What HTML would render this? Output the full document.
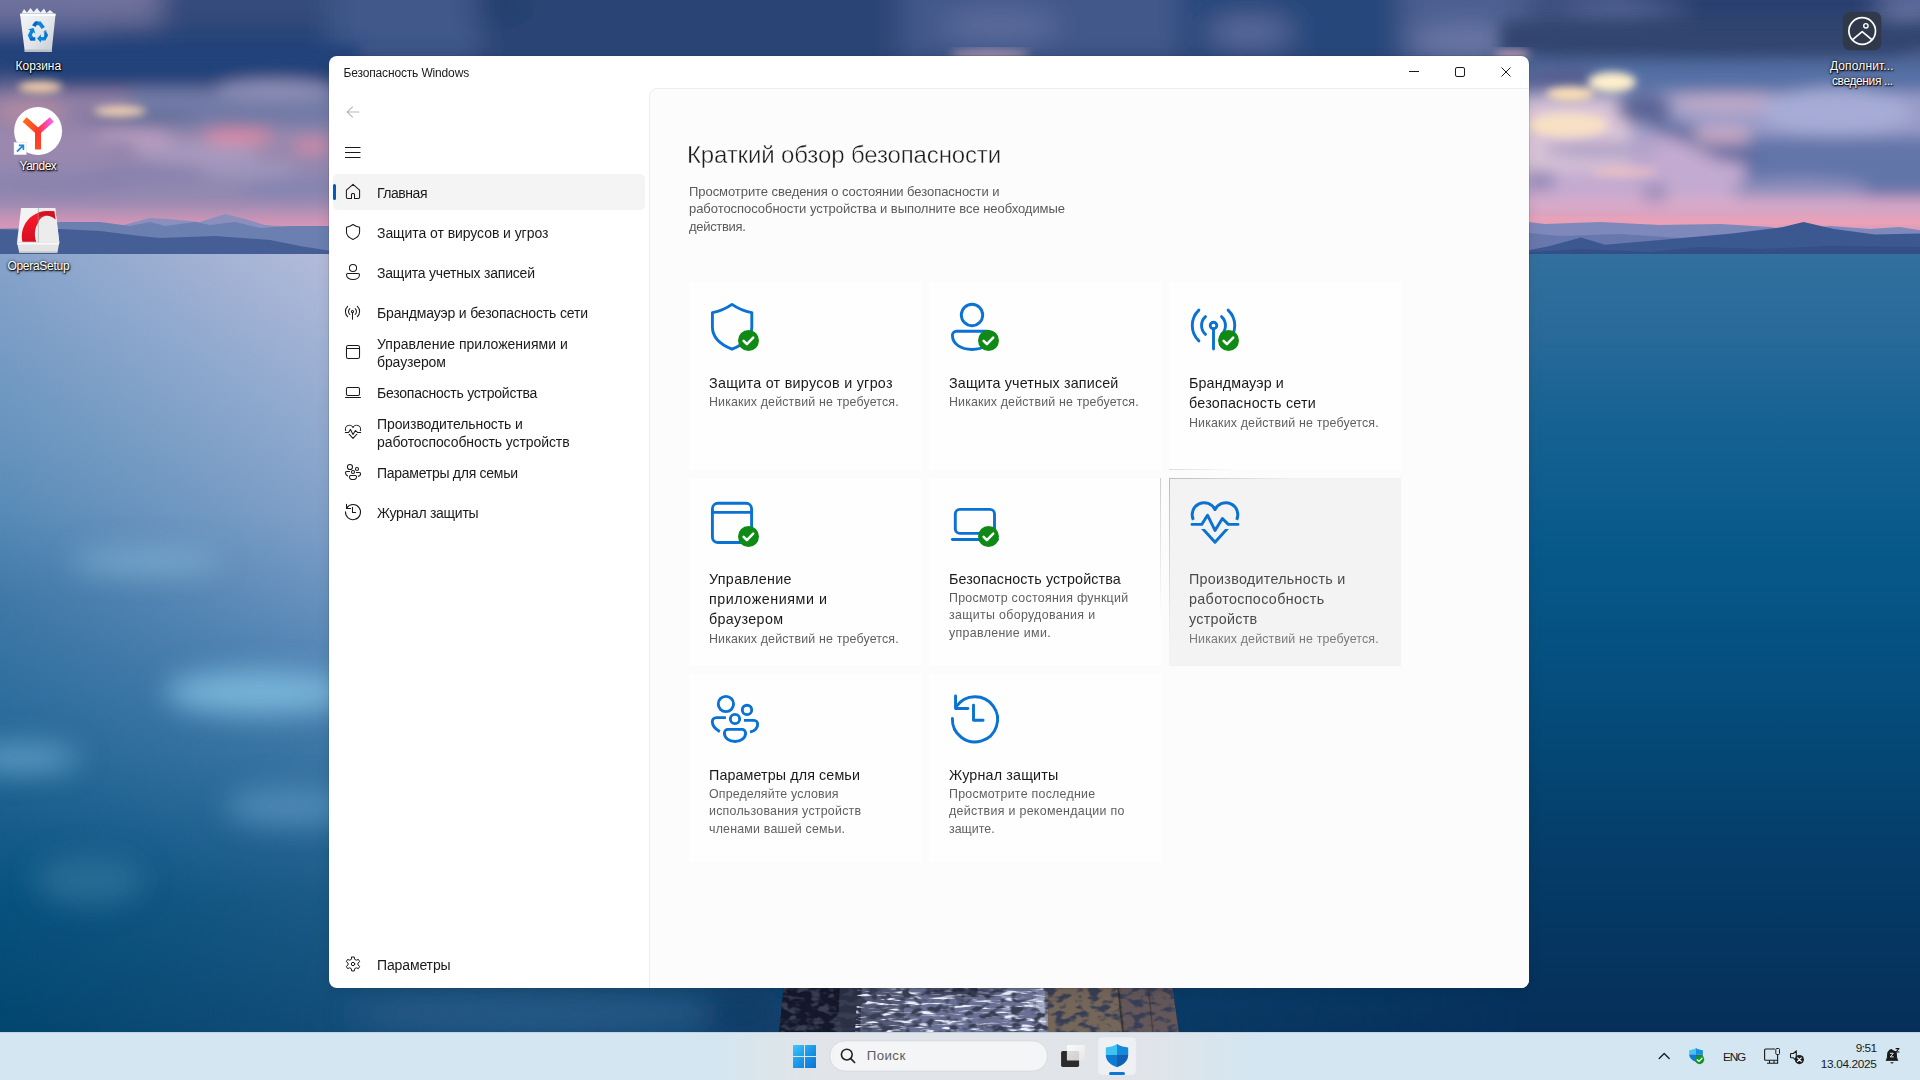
<!DOCTYPE html>
<html lang="ru"><head><meta charset="utf-8"><title>Безопасность Windows</title>
<style>
*{box-sizing:border-box;margin:0;padding:0}
html,body{width:1920px;height:1080px;overflow:hidden;background:#0d4878;font-family:"Liberation Sans",sans-serif;color:#1a1a1a}
body{position:relative}
.wp{position:absolute;left:0;top:0;width:1920px;height:1080px;display:block}
.abs{position:absolute}
.t{position:absolute;white-space:nowrap;line-height:1;transform-origin:0 0}
/* desktop icons */
.dlabel{position:absolute;color:#fff;font-size:12px;line-height:15px;text-align:center;white-space:nowrap;text-shadow:0 1px 2px rgba(0,0,0,.9),0 0 3px rgba(0,0,0,.8),1px 1px 1px rgba(0,0,0,.7)}
/* window */
.win{position:absolute;left:329px;top:56px;width:1200px;height:932px;background:#fff;border-radius:8px;overflow:hidden;box-shadow:0 0 0 1px rgba(40,50,70,.14),0 4px 14px rgba(0,0,0,.10)}
.panel{position:absolute;left:320px;top:32px;width:900px;height:920px;background:#fcfcfc;border:1px solid #ededed;border-top-left-radius:8px}
.sel{position:absolute;left:4px;top:118px;width:312px;height:36px;background:#f4f4f4;border-radius:5px}
.acc{position:absolute;left:4px;top:128px;width:3px;height:16px;background:#005fb8;border-radius:2px}
.nav{position:absolute;left:48px;font-size:14px;line-height:18px;color:#1a1a1a;white-space:nowrap}
.ico{position:absolute;left:15px;width:18px;height:18px;overflow:visible;fill:none;stroke:#1a1a1a;stroke-width:1.15;stroke-linecap:round;stroke-linejoin:round}
.tile{position:absolute;width:232px;height:188px;background:#fefefe}
.tile.hov{background:#f3f3f3}
.tt{position:absolute;left:20px;font-size:15px;line-height:20px;color:#1a1a1a;white-space:nowrap}
.td{position:absolute;left:20px;font-size:13px;line-height:17.5px;color:#5f5f5f;white-space:nowrap}
.hov .tt{color:#4a4a4a}.hov .td{color:#7a7a7a}
.big{position:absolute;overflow:visible;fill:none;stroke:#0a72d3;stroke-width:2.9;stroke-linecap:round;stroke-linejoin:round}
.badge{position:absolute;width:21px;height:21px;border-radius:50%;background:#0f8a14}
.badge svg{position:absolute;left:0;top:0;width:21px;height:21px}
/* taskbar */
.tb{position:absolute;left:0;top:1032px;width:1920px;height:48px;background:#d3e6f1;border-top:1px solid #c0d3e0}
.tray{position:absolute;font-size:12px;color:#1a1a1a;white-space:nowrap;line-height:14px}
</style></head>
<body>
<svg class="wp" width="1920" height="1080" viewBox="0 0 1920 1080">
<defs>
<linearGradient id="sky" x1="0" y1="0" x2="0" y2="1">
<stop offset="0" stop-color="#4a5e92"/>
<stop offset="0.10" stop-color="#344d80"/>
<stop offset="0.30" stop-color="#2b4575"/>
<stop offset="0.40" stop-color="#6f74a4"/>
<stop offset="0.62" stop-color="#9487b2"/>
<stop offset="0.80" stop-color="#b290b6"/>
<stop offset="0.88" stop-color="#d99bb8"/>
<stop offset="1" stop-color="#c795b8"/>
</linearGradient>
<linearGradient id="seaA" x1="0" y1="254" x2="0" y2="1034" gradientUnits="userSpaceOnUse">
<stop offset="0" stop-color="#86a3ca"/>
<stop offset="0.1" stop-color="#7a9dc6"/>
<stop offset="0.25" stop-color="#6593bd"/>
<stop offset="0.33" stop-color="#588bb7"/>
<stop offset="0.44" stop-color="#4079a8"/>
<stop offset="0.57" stop-color="#2e6e9e"/>
<stop offset="0.64" stop-color="#266896"/>
<stop offset="0.74" stop-color="#155c8b"/>
<stop offset="0.83" stop-color="#08527f"/>
<stop offset="1" stop-color="#03466f"/>
</linearGradient>
<linearGradient id="seaB" x1="0" y1="254" x2="0" y2="1034" gradientUnits="userSpaceOnUse">
<stop offset="0" stop-color="#b7bcdb"/>
<stop offset="0.1" stop-color="#a6b5d6"/>
<stop offset="0.25" stop-color="#90a9ce"/>
<stop offset="0.33" stop-color="#84a2ca"/>
<stop offset="0.44" stop-color="#6a93bf"/>
<stop offset="0.57" stop-color="#4b80b0"/>
<stop offset="0.64" stop-color="#3d77a6"/>
<stop offset="0.74" stop-color="#2a6796"/>
<stop offset="0.83" stop-color="#1c5a86"/>
<stop offset="1" stop-color="#124c78"/>
</linearGradient>
<linearGradient id="seaR" x1="0" y1="254" x2="0" y2="1034" gradientUnits="userSpaceOnUse">
<stop offset="0" stop-color="#31709f"/>
<stop offset="0.10" stop-color="#296a9a"/>
<stop offset="0.20" stop-color="#176393"/>
<stop offset="0.38" stop-color="#07598a"/>
<stop offset="0.58" stop-color="#044c7b"/>
<stop offset="0.78" stop-color="#053c68"/>
<stop offset="1" stop-color="#052f59"/>
</linearGradient>
<linearGradient id="mixAB" x1="0" y1="0" x2="345" y2="0" gradientUnits="userSpaceOnUse">
<stop offset="0" stop-color="#fff" stop-opacity="0"/><stop offset="1" stop-color="#fff" stop-opacity="1"/>
</linearGradient>
<linearGradient id="mixR" x1="420" y1="0" x2="1540" y2="0" gradientUnits="userSpaceOnUse">
<stop offset="0" stop-color="#fff" stop-opacity="0"/><stop offset="1" stop-color="#fff" stop-opacity="1"/>
</linearGradient>
<mask id="mB" maskUnits="userSpaceOnUse" x="0" y="254" width="1920" height="826"><rect x="0" y="254" width="1920" height="826" fill="url(#mixAB)"/></mask>
<mask id="mR" maskUnits="userSpaceOnUse" x="0" y="254" width="1920" height="826"><rect x="0" y="254" width="1920" height="826" fill="url(#mixR)"/></mask>
<filter id="b8" x="-20%" y="-20%" width="140%" height="140%"><feGaussianBlur stdDeviation="8"/></filter>
<filter id="b14" x="-30%" y="-30%" width="160%" height="160%"><feGaussianBlur stdDeviation="14"/></filter>
<filter id="b4" x="-20%" y="-20%" width="140%" height="140%"><feGaussianBlur stdDeviation="4"/></filter>
<filter id="b25" x="-40%" y="-40%" width="180%" height="180%"><feGaussianBlur stdDeviation="25"/></filter>
<clipPath id="hvclip"><rect x="20" y="51" width="52" height="20"/></clipPath>
<clipPath id="skyclip"><rect x="0" y="0" width="1920" height="254"/></clipPath>
<clipPath id="seaclip"><rect x="0" y="254" width="1920" height="780"/></clipPath>
</defs>
<rect x="0" y="0" width="1920" height="254" fill="url(#sky)"/>
<g clip-path="url(#skyclip)">
<!-- base bands (blurred blocks) -->
<g filter="url(#b14)">
<rect x="-40" y="-40" width="2000" height="140" fill="#2b4676"/>
<rect x="-40" y="-40" width="200" height="64" fill="#70729c"/>
<rect x="160" y="-40" width="180" height="62" fill="#364b7b"/>
<rect x="-40" y="22" width="140" height="20" fill="#46588c"/>
<rect x="-40" y="40" width="380" height="42" fill="#21417a"/>
<rect x="330" y="-40" width="150" height="100" fill="#40598a"/>
<rect x="480" y="-40" width="420" height="100" fill="#294575"/>
<rect x="900" y="-40" width="280" height="100" fill="#43588a"/>
<rect x="1180" y="-40" width="220" height="100" fill="#27477a"/>
<rect x="1400" y="-40" width="130" height="100" fill="#4c5f90"/>
<rect x="1528" y="-40" width="120" height="96" fill="#3d5080"/>
<rect x="1640" y="-40" width="240" height="98" fill="#2c416f"/>
<rect x="1880" y="-40" width="80" height="70" fill="#566596"/>
<ellipse cx="1625" cy="14" rx="60" ry="9" fill="#5a6c9c"/>
<ellipse cx="1905" cy="38" rx="26" ry="14" fill="#8d96c0"/>
<ellipse cx="1000" cy="26" rx="60" ry="16" fill="#5b6c9c"/>
<ellipse cx="1250" cy="32" rx="45" ry="16" fill="#5c6a9b"/>
<ellipse cx="1470" cy="44" rx="60" ry="18" fill="#6c78a7"/>
<ellipse cx="500" cy="6" rx="30" ry="10" fill="#1f3a68"/>
</g>
<!-- mid sky left -->
<g filter="url(#b8)">
<rect x="-20" y="44" width="380" height="40" fill="#22427a"/>
<path d="M60 84H360V92L300 88L240 94L180 90L120 96L60 92Z" fill="#2a4679"/>
<rect x="-20" y="90" width="160" height="44" fill="#8f7fa6"/>
<rect x="130" y="88" width="230" height="44" fill="#727aa6"/>
<ellipse cx="275" cy="90" rx="60" ry="10" fill="#8d8fb6"/>
<ellipse cx="30" cy="112" rx="36" ry="13" fill="#ae8aa2"/>
<ellipse cx="8" cy="84" rx="16" ry="8" fill="#59608f"/>
<rect x="-20" y="128" width="380" height="40" fill="#9a88ae"/>
<rect x="-20" y="164" width="380" height="44" fill="#9188b0"/>
<ellipse cx="135" cy="139" rx="38" ry="11" fill="#b79bbd"/>
<ellipse cx="200" cy="153" rx="60" ry="11" fill="#a999be"/>
<ellipse cx="145" cy="173" rx="55" ry="7" fill="#8681ad"/>
<ellipse cx="250" cy="170" rx="48" ry="9" fill="#9f95bb"/>
<ellipse cx="290" cy="188" rx="50" ry="11" fill="#8584b1"/>
<ellipse cx="60" cy="185" rx="70" ry="10" fill="#8a82ad"/>
<ellipse cx="238" cy="136" rx="34" ry="8" fill="#d98aa5"/>
<ellipse cx="312" cy="146" rx="18" ry="6" fill="#d48aa6"/>
<ellipse cx="118" cy="147" rx="18" ry="4" fill="#7f78a5"/>
<ellipse cx="140" cy="119" rx="60" ry="4" fill="#54638f"/>
<rect x="-20" y="204" width="380" height="14" fill="#aa8fb5"/>
<rect x="-20" y="217" width="380" height="14" fill="#d896b6"/>
</g>
<g filter="url(#b4)">
<ellipse cx="40" cy="87" rx="22" ry="6" fill="#f4cdaa"/>
<ellipse cx="120" cy="111" rx="26" ry="5" fill="#f7d6b2"/>
</g>
<!-- mid sky right -->
<g filter="url(#b8)">
<path d="M1500 20H1940V50L1880 62L1800 60L1700 56L1600 60L1540 56L1500 60Z" fill="#30446f"/>
<rect x="1500" y="60" width="440" height="38" fill="#5470a4"/>
<rect x="1500" y="92" width="440" height="50" fill="#9a9cc8"/>
<rect x="1500" y="137" width="260" height="70" fill="#c3aad0"/>
<rect x="1500" y="100" width="130" height="70" fill="#dcc6d8"/>
<rect x="1745" y="136" width="200" height="66" fill="#6274a9"/>
<ellipse cx="1800" cy="190" rx="70" ry="12" fill="#8c8fbd"/>
<rect x="1500" y="198" width="440" height="20" fill="#dcaac8"/>
<ellipse cx="1562" cy="80" rx="36" ry="14" fill="#565f90"/>
<ellipse cx="1644" cy="109" rx="28" ry="15" fill="#5a6494"/>
<path d="M1655 118L1700 128L1755 150L1760 166L1720 160L1680 140L1650 130Z" fill="#5e6a9e"/>
<ellipse cx="1727" cy="103" rx="56" ry="8" fill="#c4acc8"/>
<ellipse cx="1722" cy="135" rx="30" ry="9" fill="#c8a8c4"/>
<ellipse cx="1836" cy="112" rx="74" ry="24" fill="#a6acd6"/>
<ellipse cx="1541" cy="180" rx="15" ry="10" fill="#8d86b5"/>
<ellipse cx="1655" cy="193" rx="14" ry="9" fill="#938bb9"/>
<ellipse cx="1600" cy="150" rx="60" ry="8" fill="#a89cc4"/>
</g>
<g filter="url(#b4)">
<ellipse cx="1612" cy="82" rx="24" ry="10" fill="#fff0cc"/>
<ellipse cx="1570" cy="94" rx="24" ry="7" fill="#fde0b8"/>
<ellipse cx="1568" cy="125" rx="40" ry="12" fill="#f8e0c4"/>
<ellipse cx="1624" cy="172" rx="34" ry="3.500" fill="#f0c0c0"/>
<rect x="1500" y="217" width="440" height="8" fill="#f2a2b6"/>
</g>
<!-- bottom edge of top strip (just above the window) -->
<g filter="url(#b4)">
<ellipse cx="990" cy="54" rx="40" ry="5" fill="#a690aa"/>
<ellipse cx="1512" cy="54" rx="18" ry="5" fill="#b79ab5"/>
</g>

</g>
<g>
<path d="M120 226L150 218L168 219L200 222L225 214L245 219L265 225L290 227L335 226L335 256L120 256Z" fill="#8a8fbe"/>
<path d="M-5 229L30 228L60 222L100 222L130 226L150 222L165 226L195 222L210 225L235 222L260 228L290 226L335 226L335 256L-5 256Z" fill="#6b7fb0"/>
<path d="M-5 229L20 230L60 229L100 231L140 236L160 238L215 236L270 240L300 246L325 250L335 252L335 256L-5 256Z" fill="#465e96"/>
<path d="M1520 221L1545 224L1600 222L1660 225L1720 224L1770 227L1790 231L1830 226L1870 229L1900 227L1925 231L1925 256L1520 256Z" fill="#7e88ba"/>
<path d="M1520 232L1560 236L1620 234L1680 238L1740 236L1790 240L1925 238L1925 256L1520 256Z" fill="#6878ae"/>
<path d="M1520 252L1550 246L1581 237.500L1605 244.700L1660 240L1732 233.500L1783 227L1803.500 222L1834 229L1875 234.500L1925 233.500L1925 256L1520 256Z" fill="#3c5890"/>
<path d="M1520 253L1580 249L1650 252L1700 247L1760 249L1830 246L1925 247L1925 256L1520 256Z" fill="#344f88"/>
</g>

<rect x="0" y="254" width="1920" height="826" fill="url(#seaA)"/>
<rect x="0" y="254" width="1920" height="826" fill="url(#seaB)" mask="url(#mB)"/>
<rect x="0" y="254" width="1920" height="826" fill="url(#seaR)" mask="url(#mR)"/>
<g clip-path="url(#seaclip)">
<g filter="url(#b14)">
<ellipse cx="146" cy="561" rx="75" ry="12" fill="#80b2d4" opacity=".75"/>
<ellipse cx="260" cy="692" rx="95" ry="22" fill="#78b4d8"/>
<ellipse cx="20" cy="758" rx="60" ry="15" fill="#5a98c2"/>
<ellipse cx="290" cy="806" rx="65" ry="20" fill="#4d88b5"/>
<ellipse cx="90" cy="880" rx="55" ry="25" fill="#2a7099" opacity=".8"/>
<ellipse cx="540" cy="1014" rx="190" ry="22" fill="#2b5985" opacity=".85"/>
<ellipse cx="745" cy="1014" rx="40" ry="30" fill="#123c66" opacity=".8"/>
</g>

</g>
<defs>
<clipPath id="pierclip"><path d="M779 1033L784 985H1172L1179 1033Z"/></clipPath>
<clipPath id="pierL"><path d="M858 985H1045L1047 1033H855Z"/></clipPath>
<filter id="nzD" x="0" y="0" width="100%" height="100%"><feTurbulence type="fractalNoise" baseFrequency="0.09 0.16" numOctaves="2" seed="4"/><feColorMatrix values="0 0 0 0 0.04  0 0 0 0 0.05  0 0 0 0 0.09  -5 0 0 0 2.6"/></filter>
<filter id="nzL" x="0" y="0" width="100%" height="100%"><feTurbulence type="fractalNoise" baseFrequency="0.05 0.35" numOctaves="2" seed="11"/><feColorMatrix values="0 0 0 0 0.84  0 0 0 0 0.87  0 0 0 0 1  0 6 0 0 -3.1"/></filter>
</defs>
<g>
<path d="M779 1033L784 985H1172L1179 1033Z" fill="#2a2d3c"/>
<path d="M779 1033L784 985H840L838 1033Z" fill="#14182a"/>
<path d="M840 985H862L860 1033H838Z" fill="#2b3045"/>
<path d="M862 985H905L903 1033H860Z" fill="#565c78"/>
<path d="M905 985H1045L1047 1033H903Z" fill="#6a7194"/>
<path d="M1045 985H1120L1124 1033H1047Z" fill="#75665a"/>
<path d="M1120 985H1172L1179 1033H1124Z" fill="#63575a"/>
<g clip-path="url(#pierL)"><rect x="855" y="985" width="195" height="48" filter="url(#nzL)"/></g>
<rect x="1038" y="994" width="8" height="36" fill="#e8efff" filter="url(#b4)" opacity=".8"/>
<g clip-path="url(#pierclip)"><rect x="779" y="985" width="400" height="48" filter="url(#nzD)"/></g>
<path d="M1118 985L1123 1033" stroke="#2a2426" stroke-width="2" opacity=".7"/>
<path d="M1148 985L1153 1033" stroke="#3a3236" stroke-width="1.500" opacity=".6"/>
<rect x="930" y="988" width="60" height="7" fill="#12162a" filter="url(#b4)" opacity=".8"/>
</g>

</svg>

<svg class="abs" style="left:0;top:0" width="80" height="260" viewBox="0 0 80 260">
<defs>
<linearGradient id="binG" x1="0" y1="0" x2="1" y2="1"><stop offset="0" stop-color="#f4f6f8"/><stop offset="0.55" stop-color="#e2e6ea"/><stop offset="1" stop-color="#c4cad2"/></linearGradient>
<linearGradient id="yaG" x1="24" y1="0" x2="52" y2="0" gradientUnits="userSpaceOnUse"><stop offset="0" stop-color="#ff6d12"/><stop offset="0.5" stop-color="#ff3a2c"/><stop offset="0.8" stop-color="#ff45a8"/><stop offset="1" stop-color="#fb62ee"/></linearGradient>
<linearGradient id="yaS" x1="0" y1="131" x2="0" y2="150" gradientUnits="userSpaceOnUse"><stop offset="0" stop-color="#ff352c"/><stop offset="1" stop-color="#ff4a22"/></linearGradient>
<linearGradient id="opR" x1="0" y1="0" x2="0" y2="1"><stop offset="0" stop-color="#ff1b2d"/><stop offset="1" stop-color="#d40e22"/></linearGradient>
</defs>
<!-- recycle bin -->
<path d="M21.500 13.500L24 9l3 3.500L30.500 8l3 4 3.500-4 3.500 4.500 3.500-4 2.500 4.500 3.500-3 4 3.500z" fill="#eef1f4"/>
<path d="M20 13.700H55.600L51.600 51.900H24.800z" fill="url(#binG)"/>
<path d="M20 13.700H55.600L55.300 16H20.300z" fill="#fbfcfd"/>
<path d="M24.600 49.500H51.800L51.600 51.900H24.800z" fill="#b9bfc7"/>
<g fill="#0b84de"><path d="M32.200 25.300l3-3.900h5.500l4.200 5.600-3.300 1.900-2.700-3.600z"/><path d="M45.300 31.200l2.700 4.100-2.800 5.100h-4.300v2.400l-3.800-4.200 3.800-4v2.300h3z" /><path d="M35.300 40.400h-4.900l-2.600-5 2.500-4.900-2.100-1.200 5.500-1.300 1.600 5.400-2-1.200-1.400 2.900z"/></g>
<g fill="#0765c4"><path d="M32.200 25.300l3-3.900 2.700 0.100-2.200 5.400z"/><path d="M43.500 31.300l2.500-1.500 2 5.500-2.800 5.100z" opacity=".6"/><path d="M30.400 40.400l-1-2 5.900-1.500v3.500z"/></g>
<!-- yandex -->
<circle cx="38.100" cy="131" r="24" fill="#fff"/>
<path d="M24.600 119.500L38 131.500L51.800 119.500" fill="none" stroke="url(#yaG)" stroke-width="6" stroke-linejoin="miter"/>
<path d="M38 130.500V149.500" fill="none" stroke="url(#yaS)" stroke-width="6"/>
<rect x="14" y="142.300" width="12.300" height="12.400" fill="#fff" stroke="#d8dde6" stroke-width=".5"/>
<path d="M17 151.700l6-6M18.800 145.300h4.600v4.600" fill="none" stroke="#1a86e0" stroke-width="1.700"/>
<!-- opera setup -->
<path d="M21.100 208H55.200L59.300 242.400H17z" fill="#f3f3f3"/>
<path d="M38.300 208H55.200L59.300 242.400H38.300z" fill="#ececec"/>
<path d="M17 242.400H59.300L57.400 252.800H19.300z" fill="#e4e4e4"/>
<path d="M17 242.400H59.300L59 244.400H17.300z" fill="#fafafa"/>
<path d="M19.500 251.300H57.200L57 252.800H19.300z" fill="#c9c9c9"/>
<path d="M22.400 241.700C19.500 226 30 211.500 48 211L54.300 211.200 55.500 219.500C49 213.500 41 215 38.300 222.500C34.500 228 34 236 36.300 241.700z" fill="url(#opR)"/>
<path d="M38.300 212.300C44 210.600 50 210.800 54.300 211.200L55.500 219.500C52 215 44 213.500 38.300 217.500z" fill="#b00d1e" opacity=".55"/>
<path d="M38.300 208V242.400" stroke="#9a9a9a" stroke-width=".6"/>
</svg>
<div class="dlabel" id="dl1" style="left:15.600px;top:59px;letter-spacing:-0.031px">Корзина</div>
<div class="dlabel" id="dl2" style="left:19.600px;top:158.500px;letter-spacing:-0.519px">Yandex</div>
<div class="dlabel" id="dl3" style="left:7.400px;top:259px;letter-spacing:-0.282px">OperaSetup</div>
<svg class="abs" style="left:1840px;top:8px" width="46" height="46" viewBox="1840 8 46 46">
<rect x="1842.800" y="11.700" width="38.500" height="38.500" rx="7" fill="#2f3948" fill-opacity=".95"/>
<circle cx="1862.200" cy="31" r="13.300" fill="none" stroke="#fff" stroke-width="1.700"/>
<circle cx="1865.900" cy="25.800" r="2.200" fill="none" stroke="#fff" stroke-width="1.400"/>
<path d="M1852.600 39.600L1862.200 31.700L1871.800 39.600" fill="none" stroke="#fff" stroke-width="1.700" stroke-linejoin="round"/>
</svg>
<div class="dlabel" id="dl4" style="left:1829.900px;top:58.600px;letter-spacing:0.132px">Дополнит...</div>
<div class="dlabel" id="dl5" style="left:1832px;top:73.600px;letter-spacing:-0.392px">сведения ...</div>

<div class="win">
<div class="t" id="wtitle" style="left:14.500px;top:11px;font-size:12px;letter-spacing:-0.153px">Безопасность Windows</div>
<svg class="abs" style="left:1075px;top:6px" width="120" height="20" viewBox="0 0 120 20" fill="none" stroke="#1a1a1a" stroke-width="1"><path d="M5 9.5h10"/><rect x="51.5" y="5.500" width="9" height="9" rx="1.5"/><path d="M97.500 5.500l9 9M106.500 5.500l-9 9"/></svg>
<svg class="abs" style="left:16px;top:49px" width="16" height="14" viewBox="0 0 16 14" fill="none" stroke="#b9b9b9" stroke-width="1.100" stroke-linecap="round" stroke-linejoin="round"><path d="M14 7H2.500M7.500 1.800L2.200 7l5.300 5.200"/></svg>
<svg class="abs" style="left:16px;top:90px" width="16" height="12" viewBox="0 0 16 12" fill="none" stroke="#1a1a1a" stroke-width="1"><path d="M0 1.500h15.500M0 6.500h15.500M0 11.500h15.500"/></svg>
<div class="sel"></div><div class="acc"></div>
<svg class="ico" style="left:0;top:0;width:60px;height:160px" viewBox="0 0 60 160"><path style="stroke-width:1.05" d="M24 128.400L30.600 134.200V141.300a1.200 1.200 0 0 1-1.200 1.200H25.500V138.400a1 1 0 0 0-1-1h-1a1 1 0 0 0-1 1V142.500H18.600a1.200 1.200 0 0 1-1.200-1.200V134.200Z"/></svg><svg class="ico" style="left:17px;top:168px;width:16px;height:16px" viewBox="22 21 48 48"><g style="stroke-width:3.15"><path d="M43 22.400C37.500 26.300 30.500 29.300 23.400 30.600V45C23.400 54.500 30.500 62.200 43 67.200C55.500 62.200 62.800 54.500 62.800 45V30.600C55.500 29.300 48.500 26.300 43 22.400Z"/></g></svg><svg class="ico" style="left:17px;top:208px;width:16px;height:16px" viewBox="22 21 48 48"><g style="stroke-width:3.15"><circle cx="43" cy="33" r="10.700"/><path d="M27.400 49.300H58.500a4 4 0 0 1 4 4C62.500 62 54 67.500 43 67.500C32 67.500 23.400 62 23.400 53.300a4 4 0 0 1 4-4z"/></g></svg><svg class="ico" style="left:15.5px;top:248px;width:16px;height:16px" viewBox="22 21 48 48"><g style="stroke-width:3.15"><circle cx="44.500" cy="43.500" r="3.300"/><path d="M44.500 46.800V67"/><path d="M36.500 34.600A12 12 0 0 0 36.500 52.400M52.500 34.600A12 12 0 0 1 52.500 52.400M29.900 28.100A21.200 21.200 0 0 0 29.900 58.900M59.100 28.100A21.200 21.200 0 0 1 59.100 58.900"/></g></svg><svg class="ico" style="left:17px;top:288px;width:16px;height:16px" viewBox="22 21 48 48"><g style="stroke-width:3.15"><rect x="23.400" y="25.300" width="39.200" height="39.200" rx="5.500"/><path d="M23.400 34.400H62.600"/></g></svg><svg class="ico" style="left:16px;top:328px;width:16px;height:16px" viewBox="22 21 48 48"><g style="stroke-width:3.15"><rect x="26.300" y="31.400" width="39.200" height="24" rx="4.500"/><path d="M23.400 61.500H68.400"/></g></svg><svg class="ico" style="left:16px;top:367.7px;width:16px;height:16px" viewBox="22 21 48 48"><g style="stroke-width:3.15"><path d="M24.300 41.800A11.800 11.800 0 0 1 46 31.600A11.800 11.800 0 0 1 67.700 41.800" stroke-linecap="butt"/><path d="M23 46.400H32.700L38.500 37.200L46 52.400L53.400 40.500L59.300 46.400H69"/><path d="M30 46.500L46 64.300L62 46.500" clip-path="url(#hvclip)"/></g></svg><svg class="ico" style="left:16px;top:408px;width:16px;height:16px" viewBox="22 21 48 48"><g style="stroke-width:3.15"><circle cx="36.900" cy="30" r="7.650"/><circle cx="58" cy="35.900" r="4.700"/><circle cx="46" cy="45" r="4.650"/><path d="M36.900 43.600H27.300a4 4 0 0 0-4 4C23.300 51 25.500 54.800 30.800 57.600" stroke-linecap="butt"/><path d="M54.900 46.400H65a3.700 3.700 0 0 1 3.700 3.700C68.700 54 66 57 61 58.100" stroke-linecap="butt"/><path d="M39 55.400H53a3.600 3.600 0 0 1 3.600 3.600C56.600 64 52 67.500 46 67.500C40 67.500 35.400 64 35.400 59a3.600 3.600 0 0 1 3.600-3.600z"/></g></svg><svg class="ico" style="left:16px;top:447.7px;width:16px;height:16px" viewBox="22 21 48 48"><g style="stroke-width:3.15"><path d="M23.400 44.500A22.600 22.600 0 1 0 27.400 32.500"/><path d="M26.550 22V34.500H38.900"/><path d="M44.500 31.100V46.300H54.100"/></g></svg><svg class="ico" style="left:14px;top:898px;width:20px;height:20px" viewBox="0 0 20 20"><path style="stroke-width:1;stroke-linejoin:round" d="M8.74 3.01L11.26 3.01L11.69 5.30L13.23 6.18L15.42 5.42L16.68 7.59L14.92 9.11L14.92 10.89L16.68 12.41L15.42 14.58L13.23 13.82L11.69 14.70L11.26 16.99L8.74 16.99L8.31 14.70L6.77 13.82L4.58 14.58L3.32 12.41L5.08 10.89L5.08 9.11L3.32 7.59L4.58 5.42L6.77 6.18L8.31 5.30Z"/><circle cx="10" cy="10" r="1.700" style="stroke-width:1"/></svg>
<div class="nav" id="n1" style="top:128px;letter-spacing:-0.471px">Главная</div>
<div class="nav" id="n2" style="top:168px;letter-spacing:-0.066px">Защита от вирусов и угроз</div>
<div class="nav" id="n3" style="top:208px;letter-spacing:-0.211px">Защита учетных записей</div>
<div class="nav" id="n4" style="top:248px;letter-spacing:-0.164px">Брандмауэр и безопасность сети</div>
<div class="nav" id="n5a" style="top:279px;letter-spacing:0.020px">Управление приложениями и</div>
<div class="nav" id="n5b" style="top:297px;letter-spacing:-0.099px">браузером</div>
<div class="nav" id="n6" style="top:328px;letter-spacing:-0.232px">Безопасность устройства</div>
<div class="nav" id="n7a" style="top:359px;letter-spacing:-0.090px">Производительность и</div>
<div class="nav" id="n7b" style="top:377px;letter-spacing:-0.095px">работоспособность устройств</div>
<div class="nav" id="n8" style="top:408px;letter-spacing:-0.266px">Параметры для семьи</div>
<div class="nav" id="n9" style="top:448px;letter-spacing:-0.285px">Журнал защиты</div>
<div class="nav" id="n10" style="top:900px;letter-spacing:-0.127px">Параметры</div>
<div class="panel">
<div class="t" id="h1" style="left:37px;top:53.500px;font-size:24px;color:#1c1c1c;-webkit-text-stroke:0.400px #fcfcfc;letter-spacing:-0.135px">Краткий обзор безопасности</div>
<div class="td" id="p1" style="left:39px;top:93.700px;color:#5a5a5a;letter-spacing:-0.057px">Просмотрите сведения о состоянии безопасности и</div>
<div class="td" id="p2" style="left:39px;top:111.200px;color:#5a5a5a;letter-spacing:-0.045px">работоспособности устройства и выполните все необходимые</div>
<div class="td" id="p3" style="left:39px;top:128.700px;color:#5a5a5a;letter-spacing:-0.307px">действия.</div>
<div class="tile" style="left:39px;top:193px"><svg class="big" style="left:0;top:0" width="92" height="92" viewBox="0 0 92 92"><path d="M43 22.400C37.500 26.300 30.500 29.300 23.400 30.600V45C23.400 54.500 30.500 62.200 43 67.200C55.500 62.200 62.800 54.500 62.800 45V30.600C55.500 29.300 48.500 26.300 43 22.400Z"/></svg><div class="badge" style="left:49px;top:48px"><svg viewBox="0 0 21 21"><path d="M5.600 10.800l3.300 3.300 6.300-6.400" fill="none" stroke="#fff" stroke-width="2.500" stroke-linecap="round" stroke-linejoin="round"/></svg></div><div class="tt" id="t00_0" style="top:91.00px;font-size:14.3px;letter-spacing:0.287px">Защита от вирусов и угроз</div><div class="td" id="d00_0" style="top:112.15px;font-size:12.4px;letter-spacing:0.162px">Никаких действий не требуется.</div></div><div class="tile" style="left:279px;top:193px"><svg class="big" style="left:0;top:0" width="92" height="92" viewBox="0 0 92 92"><circle cx="43" cy="33" r="10.700"/><path d="M27.400 49.300H58.500a4 4 0 0 1 4 4C62.500 62 54 67.500 43 67.500C32 67.500 23.400 62 23.400 53.300a4 4 0 0 1 4-4z"/></svg><div class="badge" style="left:49px;top:48px"><svg viewBox="0 0 21 21"><path d="M5.600 10.800l3.300 3.300 6.300-6.400" fill="none" stroke="#fff" stroke-width="2.500" stroke-linecap="round" stroke-linejoin="round"/></svg></div><div class="tt" id="t01_0" style="top:91.00px;font-size:14.3px;letter-spacing:0.164px">Защита учетных записей</div><div class="td" id="d01_0" style="top:112.15px;font-size:12.4px;letter-spacing:0.162px">Никаких действий не требуется.</div></div><div class="tile" style="left:519px;top:193px"><div class="abs" style="left:0;bottom:0;width:70px;height:1px;background:linear-gradient(90deg,#dcdcdc,rgba(220,220,220,0))"></div><svg class="big" style="left:0;top:0" width="92" height="92" viewBox="0 0 92 92"><circle cx="44.500" cy="43.500" r="3.300"/><path d="M44.500 46.800V67"/><path d="M36.500 34.600A12 12 0 0 0 36.500 52.400M52.500 34.600A12 12 0 0 1 52.500 52.400M29.900 28.100A21.200 21.200 0 0 0 29.900 58.900M59.100 28.100A21.200 21.200 0 0 1 59.100 58.900"/></svg><div class="badge" style="left:49px;top:48px"><svg viewBox="0 0 21 21"><path d="M5.600 10.800l3.300 3.300 6.300-6.400" fill="none" stroke="#fff" stroke-width="2.500" stroke-linecap="round" stroke-linejoin="round"/></svg></div><div class="tt" id="t02_0" style="top:91.00px;font-size:14.3px;letter-spacing:0.138px">Брандмауэр и</div><div class="tt" id="t02_1" style="top:111.00px;font-size:14.3px;letter-spacing:0.236px">безопасность сети</div><div class="td" id="d02_0" style="top:132.60px;font-size:12.4px;letter-spacing:0.162px">Никаких действий не требуется.</div></div><div class="tile" style="left:39px;top:389px"><svg class="big" style="left:0;top:0" width="92" height="92" viewBox="0 0 92 92"><rect x="23.400" y="25.300" width="39.200" height="39.200" rx="5.500"/><path d="M23.400 34.400H62.600"/></svg><div class="badge" style="left:49px;top:48px"><svg viewBox="0 0 21 21"><path d="M5.600 10.800l3.300 3.300 6.300-6.400" fill="none" stroke="#fff" stroke-width="2.500" stroke-linecap="round" stroke-linejoin="round"/></svg></div><div class="tt" id="t10_0" style="top:91.00px;font-size:14.3px;letter-spacing:0.332px">Управление</div><div class="tt" id="t10_1" style="top:111.00px;font-size:14.3px;letter-spacing:0.544px">приложениями и</div><div class="tt" id="t10_2" style="top:131.00px;font-size:14.3px;letter-spacing:0.360px">браузером</div><div class="td" id="d10_0" style="top:152.70px;font-size:12.4px;letter-spacing:0.162px">Никаких действий не требуется.</div></div><div class="tile" style="left:279px;top:389px"><div class="abs" style="right:0;top:0;width:1px;height:140px;background:linear-gradient(#cdcdcd,rgba(205,205,205,0))"></div><svg class="big" style="left:0;top:0" width="92" height="92" viewBox="0 0 92 92"><rect x="26.300" y="31.400" width="39.200" height="24" rx="4.500"/><path d="M23.400 61.500H68.400"/></svg><div class="badge" style="left:49px;top:48px"><svg viewBox="0 0 21 21"><path d="M5.600 10.800l3.300 3.300 6.300-6.400" fill="none" stroke="#fff" stroke-width="2.500" stroke-linecap="round" stroke-linejoin="round"/></svg></div><div class="tt" id="t11_0" style="top:91.00px;font-size:14.3px;letter-spacing:0.134px">Безопасность устройства</div><div class="td" id="d11_0" style="top:111.70px;font-size:12.4px;letter-spacing:0.286px">Просмотр состояния функций</div><div class="td" id="d11_1" style="top:129.20px;font-size:12.4px;letter-spacing:0.332px">защиты оборудования и</div><div class="td" id="d11_2" style="top:146.70px;font-size:12.4px;letter-spacing:0.332px">управление ими.</div></div><div class="tile hov" style="left:519px;top:389px"><div class="abs" style="left:0;top:0;width:1px;height:188px;background:linear-gradient(#bcbcbc,rgba(188,188,188,0) 90%)"></div><div class="abs" style="left:0;top:0;width:232px;height:1px;background:linear-gradient(90deg,#bcbcbc,rgba(188,188,188,0) 55%)"></div><svg class="big" style="left:0;top:0" width="92" height="92" viewBox="0 0 92 92"><path d="M24.300 41.800A11.800 11.800 0 0 1 46 31.600A11.800 11.800 0 0 1 67.700 41.800" stroke-linecap="butt"/><path d="M23 46.400H32.700L38.500 37.200L46 52.400L53.400 40.500L59.300 46.400H69"/><path d="M30 46.500L46 64.300L62 46.500" clip-path="url(#hvclip)"/></svg><div class="tt" id="t12_0" style="top:91.00px;font-size:14.3px;letter-spacing:0.288px">Производительность и</div><div class="tt" id="t12_1" style="top:111.00px;font-size:14.3px;letter-spacing:0.361px">работоспособность</div><div class="tt" id="t12_2" style="top:131.00px;font-size:14.3px;letter-spacing:0.281px">устройств</div><div class="td" id="d12_0" style="top:152.70px;font-size:12.4px;letter-spacing:0.162px">Никаких действий не требуется.</div></div><div class="tile" style="left:39px;top:585px"><svg class="big" style="left:0;top:0" width="92" height="92" viewBox="0 0 92 92"><circle cx="36.900" cy="30" r="7.650"/><circle cx="58" cy="35.900" r="4.700"/><circle cx="46" cy="45" r="4.650"/><path d="M36.900 43.600H27.300a4 4 0 0 0-4 4C23.300 51 25.500 54.800 30.800 57.600" stroke-linecap="butt"/><path d="M54.900 46.400H65a3.700 3.700 0 0 1 3.700 3.700C68.700 54 66 57 61 58.100" stroke-linecap="butt"/><path d="M39 55.400H53a3.600 3.600 0 0 1 3.600 3.600C56.600 64 52 67.500 46 67.500C40 67.500 35.400 64 35.400 59a3.600 3.600 0 0 1 3.600-3.600z"/></svg><div class="tt" id="t20_0" style="top:91.00px;font-size:14.3px;letter-spacing:0.108px">Параметры для семьи</div><div class="td" id="d20_0" style="top:111.60px;font-size:12.4px;letter-spacing:0.140px">Определяйте условия</div><div class="td" id="d20_1" style="top:129.10px;font-size:12.4px;letter-spacing:0.235px">использования устройств</div><div class="td" id="d20_2" style="top:146.60px;font-size:12.4px;letter-spacing:0.202px">членами вашей семьи.</div></div><div class="tile" style="left:279px;top:585px"><svg class="big" style="left:0;top:0" width="92" height="92" viewBox="0 0 92 92"><path d="M23.400 44.500A22.600 22.600 0 1 0 27.400 32.500"/><path d="M26.550 22V34.500H38.900"/><path d="M44.500 31.100V46.300H54.100"/></svg><div class="tt" id="t21_0" style="top:91.00px;font-size:14.3px;letter-spacing:0.167px">Журнал защиты</div><div class="td" id="d21_0" style="top:111.60px;font-size:12.4px;letter-spacing:0.261px">Просмотрите последние</div><div class="td" id="d21_1" style="top:129.10px;font-size:12.4px;letter-spacing:0.318px">действия и рекомендации по</div><div class="td" id="d21_2" style="top:146.60px;font-size:12.4px;letter-spacing:0.005px">защите.</div></div>
</div>
</div>

<div class="tb">
<div class="abs" style="left:700px;top:0;width:560px;height:47px;background:linear-gradient(90deg,rgba(226,228,232,0),rgba(226,228,232,.9) 20%,rgba(226,228,232,.9) 80%,rgba(226,228,232,0))"></div>
<svg class="abs" style="left:0;top:-1px" width="1920" height="48" viewBox="0 1032 1920 48">
<defs>
<linearGradient id="wlg" x1="0" y1="0" x2="1" y2="1"><stop offset="0" stop-color="#3cc8f8"/><stop offset="0.5" stop-color="#1c98e8"/><stop offset="1" stop-color="#0a74d2"/></linearGradient>
<linearGradient id="tvw" x1="0" y1="0" x2="1" y2="1"><stop offset="0" stop-color="#ffffff"/><stop offset="1" stop-color="#e6e6e6"/></linearGradient>
</defs>
<!-- start -->
<g fill="url(#wlg)"><path d="M793 1045h11v11h-11zM805 1045h11v11h-11zM793 1057h11v11h-11zM805 1057h11v11h-11z"/></g>
<!-- search -->
<rect x="829.700" y="1040.800" width="218" height="30.400" rx="15.200" fill="#f4f5f7" stroke="#cfd3d9" stroke-width=".8"/>
<circle cx="846.800" cy="1054.600" r="5.400" fill="none" stroke="#222" stroke-width="1.600"/>
<path d="M850.800 1058.700l3.800 3.800" stroke="#222" stroke-width="1.700" stroke-linecap="round"/>
<!-- task view -->
<rect x="1061.100" y="1051.100" width="18" height="15.800" rx="1.600" fill="#2b2b2b"/>
<rect x="1066.900" y="1044.900" width="18.100" height="15.700" rx="1.200" fill="url(#tvw)" fill-opacity=".86"/>
<!-- active app -->
<rect x="1097.800" y="1036.900" width="38.500" height="38.500" rx="4.500" fill="#eef0f4" stroke="#dfe3e9" stroke-width=".7"/>
<path d="M1117 1044C1113.500 1046.300 1109.500 1047.200 1105.800 1047.400V1055H1117z" fill="#3ec2f2"/>
<path d="M1117 1044C1120.500 1046.300 1124.500 1047.200 1128.200 1047.400V1055H1117z" fill="#1489da"/>
<path d="M1105.800 1055C1106 1061 1110.500 1065 1117 1067.300V1055z" fill="#0f7ad2"/>
<path d="M1128.200 1055C1128 1061 1123.500 1065 1117 1067.300V1055z" fill="#1160b2"/>
<rect x="1109" y="1072" width="16" height="3" rx="1.500" fill="#0a78d4"/>
<!-- tray -->
<path d="M1659.200 1058.500L1664.200 1053.500L1669.200 1058.500" fill="none" stroke="#1a1a1a" stroke-width="1.300" stroke-linecap="round" stroke-linejoin="round"/>
<path d="M1696 1048.100C1693.800 1049.500 1691.500 1050.100 1689.200 1050.200V1054.500H1696z" fill="#45c4f3"/>
<path d="M1696 1048.100C1698.200 1049.500 1700.500 1050.100 1702.900 1050.200V1054.500H1696z" fill="#1a8fe0"/>
<path d="M1689.200 1054.500C1689.400 1058 1692 1060.500 1696 1061.900V1054.500z" fill="#117bd3"/>
<path d="M1702.900 1054.500C1702.700 1058 1700 1060.500 1696 1061.900V1054.500z" fill="#1263b6"/>
<circle cx="1699.600" cy="1059.600" r="4.600" fill="#14962a"/>
<path d="M1697.300 1059.700l1.700 1.700 3-3.200" fill="none" stroke="#fff" stroke-width="1.300" stroke-linecap="round" stroke-linejoin="round"/>
<!-- network -->
<path d="M1775 1049H1765.600a1 1 0 0 0-1 1V1059.300a1 1 0 0 0 1 1H1777" fill="none" stroke="#1a1a1a" stroke-width="1.100"/>
<path d="M1767 1063.300H1778M1769.500 1060.500V1063M1774 1060.500V1063M1777.600 1054.500V1063.700" fill="none" stroke="#1a1a1a" stroke-width="1.100"/>
<rect x="1775.800" y="1048.500" width="3.700" height="6" rx="1" fill="#dbe7f0" stroke="#1a1a1a" stroke-width="1"/>
<!-- volume muted -->
<path d="M1796.300 1050.800V1056M1796.300 1050.800L1793.300 1053.500H1791.300a.8.800 0 0 0-.8.800V1057a.8.800 0 0 0 .8.800H1793.300L1795 1059.400" fill="none" stroke="#1a1a1a" stroke-width="1.100" stroke-linejoin="round" stroke-linecap="round"/>
<circle cx="1799.400" cy="1059.600" r="4.600" fill="#1f1f1f"/>
<path d="M1797.600 1057.800l3.600 3.600M1801.200 1057.800l-3.600 3.600" stroke="#fff" stroke-width="1.200" stroke-linecap="round"/>
<!-- bell zz -->
<path d="M1892 1049.500C1888.500 1049.500 1887.600 1052.500 1887.600 1055C1887.600 1058 1886.800 1059.300 1886 1060.300H1898C1897.200 1059.300 1896.400 1058 1896.400 1055C1896.400 1053.500 1896.200 1052.300 1895.500 1051.300" fill="#1a1a1a" stroke="#1a1a1a" stroke-width="1" stroke-linejoin="round"/>
<path d="M1890.300 1062.300a1.800 1.800 0 0 0 3.400 0z" fill="#1a1a1a"/>
<path d="M1890.300 1053.300h3l-3 3.600h3" fill="none" stroke="#dfe9f1" stroke-width="1" stroke-linejoin="round" stroke-linecap="round"/>
<path d="M1896 1048.600h3l-3 3.400h3" fill="none" stroke="#1a1a1a" stroke-width="1.100" stroke-linejoin="round" stroke-linecap="round"/>
</svg>
<div class="tray" id="srch" style="left:866.700px;top:16px;font-size:13.300px;color:#5d5d5d;letter-spacing:0.428px">Поиск</div>
<div class="tray" id="eng" style="left:1722.900px;top:16.900px;font-size:11.800px;letter-spacing:-1.126px">ENG</div>
<div class="tray" id="clk" style="left:1855.800px;top:7.600px;font-size:11.800px;letter-spacing:-0.592px">9:51</div>
<div class="tray" id="dat" style="left:1820.800px;top:24px;font-size:11.800px;letter-spacing:-0.345px">13.04.2025</div>
</div>

</body></html>
